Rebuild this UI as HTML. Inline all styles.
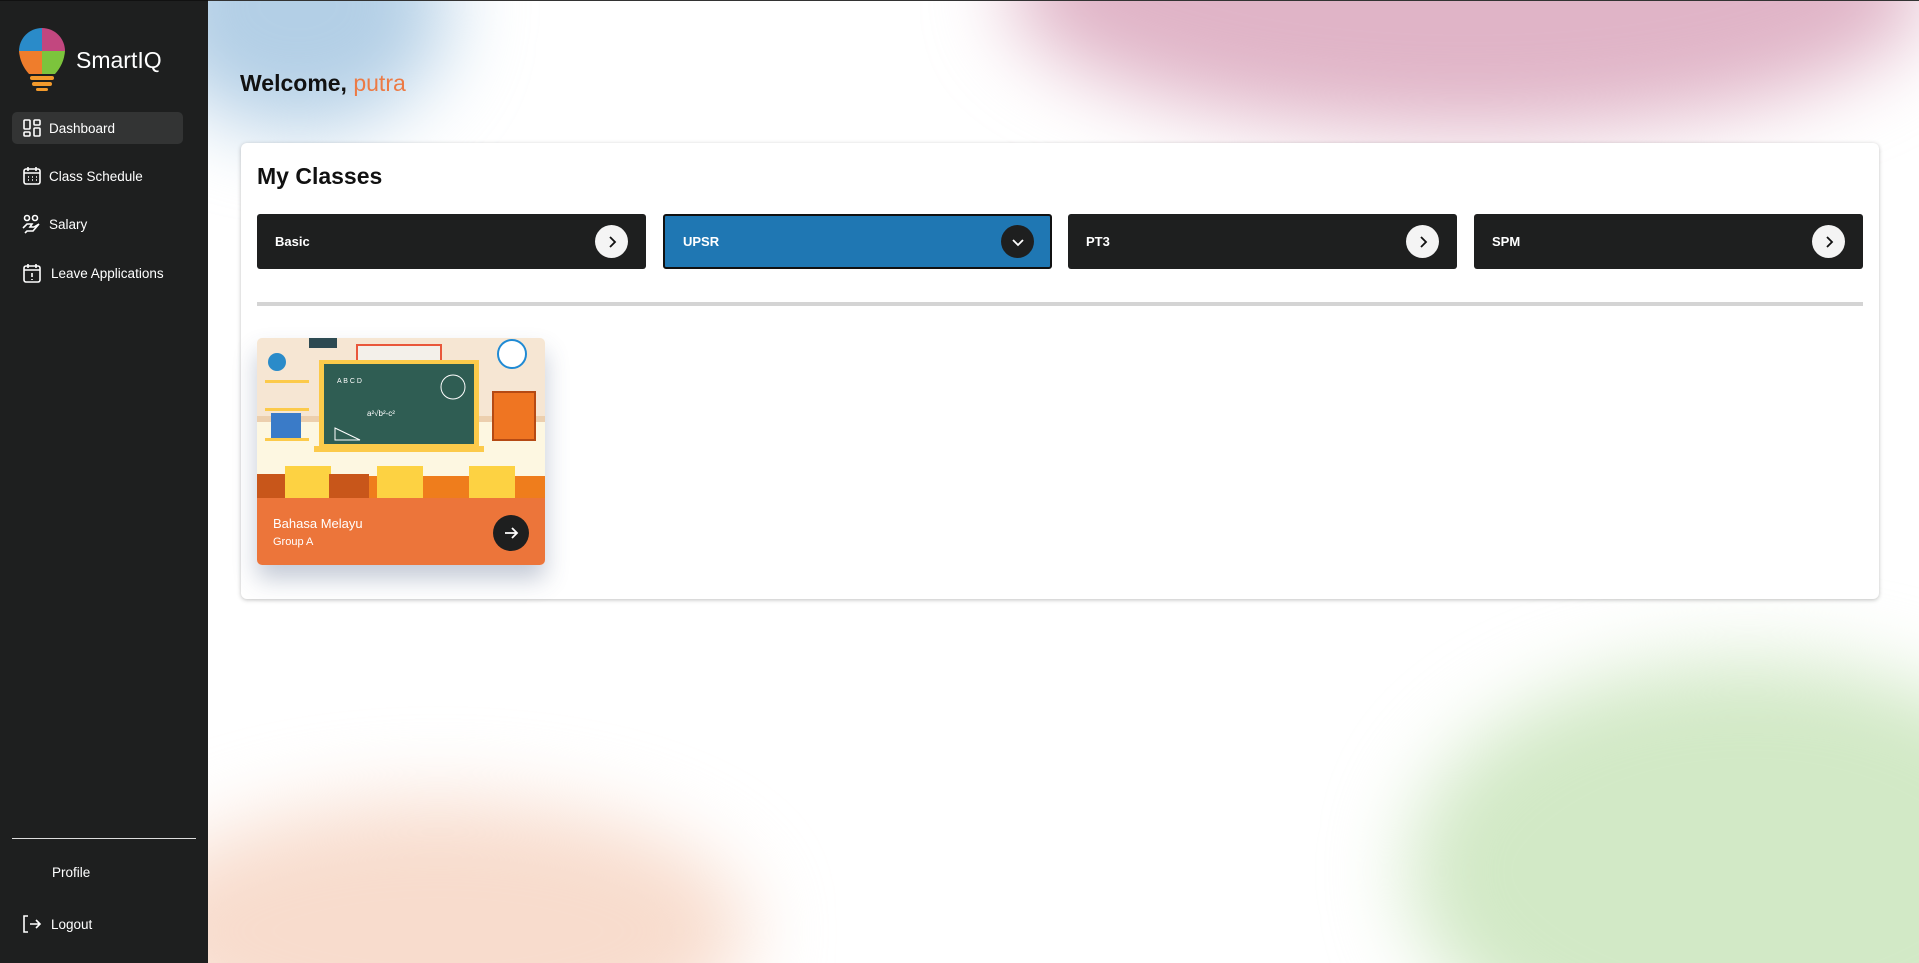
<!DOCTYPE html>
<html><head><meta charset="utf-8"><style>
*{margin:0;padding:0;box-sizing:border-box}
html,body{width:1919px;height:963px;overflow:hidden}
body{font-family:"Liberation Sans",sans-serif;background:#fff;position:relative}
.side{position:absolute;left:0;top:0;width:208px;height:963px;background:#1e1f1f;color:#fff;border-top:1px solid #111}
.main{position:absolute;left:208px;top:0;width:1711px;height:963px;overflow:hidden;border-top:1px solid #333}
.blob{position:absolute;border-radius:50%;filter:blur(40px)}
.nav{position:absolute;left:22px;font-size:13.5px;display:flex;align-items:center;gap:7px}
.nav svg{width:20px;height:20px}
.tab{position:absolute;top:214px;width:389px;height:55px;background:#1e1f1f;border-radius:3px;color:#fff;font-weight:bold;font-size:13px;display:flex;align-items:center;padding-left:18px}
.tab .c{position:absolute;right:18px;top:11px;width:33px;height:33px;border-radius:50%;background:#f4f4f4;display:flex;align-items:center;justify-content:center}
</style></head><body>
<div class="side">
  <svg style="position:absolute;left:17px;top:25px" width="50" height="68" viewBox="0 0 50 68">
    <path d="M25 2 A23 23 0 0 0 2 25 L25 25Z" fill="#2a8bc9"/>
    <path d="M25 2 A23 23 0 0 1 48 25 L25 25Z" fill="#c2477f"/>
    <path d="M2 25 Q3 38 12 48 L25 48 L25 25Z" fill="#ef7d2c"/>
    <path d="M48 25 Q47 38 38 48 L25 48 L25 25Z" fill="#7cc43c"/>
    <rect x="13" y="50" width="24" height="4" rx="2" fill="#f39a2c"/>
    <rect x="15" y="56" width="20" height="4" rx="2" fill="#f39a2c"/>
    <rect x="19" y="62" width="12" height="3" rx="1.5" fill="#f39a2c"/>
  </svg>
  <div style="position:absolute;left:76px;top:46px;font-size:23px">SmartIQ</div>
  <div style="position:absolute;left:12px;top:111px;width:171px;height:32px;background:#333434;border-radius:5px"></div>
  <div class="nav" style="top:117px"><svg viewBox="0 0 20 20" fill="none" stroke="#fff" stroke-width="1.6"><rect x="2" y="2" width="6" height="9" rx="1"/><rect x="12" y="2" width="6" height="5" rx="1"/><rect x="2" y="14" width="6" height="4" rx="1"/><rect x="12" y="10" width="6" height="8" rx="1"/></svg>Dashboard</div>
  <div class="nav" style="top:165px"><svg viewBox="0 0 20 20" fill="none" stroke="#fff" stroke-width="1.6"><rect x="2" y="3" width="16" height="15" rx="2"/><path d="M2 7h16M6 1v4M14 1v4"/><path d="M6 11h1M10 11h1M14 11h1M6 14h1M10 14h1M14 14h1" stroke-width="1.4"/></svg>Class Schedule</div>
  <div class="nav" style="top:213px"><svg viewBox="0 0 20 20" fill="none" stroke="#fff" stroke-width="1.6"><circle cx="5" cy="4" r="2.5"/><circle cx="13" cy="4" r="2.5"/><path d="M1 14l4-4h5l-2 3h4l5-3-6 7H5l-2 2"/></svg>Salary</div>
  <div class="nav" style="top:262px"><svg viewBox="0 0 20 20" fill="none" stroke="#fff" stroke-width="1.6"><rect x="2" y="3" width="16" height="16" rx="2"/><path d="M2 7h16M6 1v4M14 1v4M10 10v4M10 16v1"/></svg><span style="margin-left:2px">Leave Applications</span></div>
  <div style="position:absolute;left:12px;top:837px;width:184px;height:1px;background:#ddd"></div>
  <div style="position:absolute;left:52px;top:864px;font-size:13.5px">Profile</div>
  <div class="nav" style="top:913px"><svg viewBox="0 0 20 20" fill="none" stroke="#fff" stroke-width="1.6"><path d="M6 2H2v16h4M8 10h10M14 6l4 4-4 4"/></svg><span style="margin-left:2px">Logout</span></div>
</div>
<div class="main">
  <div class="blob" style="left:-60px;top:-120px;width:300px;height:250px;background:#b3cfe6"></div>
  <div class="blob" style="left:800px;top:-150px;width:920px;height:280px;background:#e0b4c7"></div>
  <div class="blob" style="left:-80px;top:800px;width:620px;height:260px;background:#f8dccd"></div>
  <div class="blob" style="left:1200px;top:660px;width:680px;height:420px;background:#d2e9c6"></div>
  <div style="position:absolute;left:32px;top:69px;font-size:23px;font-weight:bold;color:#111">Welcome, <span style="color:#ec7a44;font-weight:normal">putra</span></div>
  <div style="position:absolute;left:33px;top:142px;width:1638px;height:456px;background:#fff;border-radius:6px;box-shadow:0 1px 4px rgba(0,0,0,.25)">
    <div style="position:absolute;left:16px;top:20px;font-size:23px;font-weight:bold;color:#111">My Classes</div>
    <div style="position:absolute;left:16px;top:159px;width:1606px;height:4px;background:#d4d4d4"></div>
  </div>
</div>
<div class="tab" style="left:257px">Basic<div class="c"><svg width="14" height="14" viewBox="0 0 14 14"><path d="M5 2l5 5-5 5" fill="none" stroke="#111" stroke-width="1.8"/></svg></div></div>
<div class="tab" style="left:663px;background:#1f77b3;border:2px solid #111">UPSR<div class="c" style="background:#1e1f1f;top:9px;right:16px"><svg width="14" height="14" viewBox="0 0 14 14"><path d="M2 5l5 5 5-5" fill="none" stroke="#fff" stroke-width="1.8"/></svg></div></div>
<div class="tab" style="left:1068px">PT3<div class="c"><svg width="14" height="14" viewBox="0 0 14 14"><path d="M5 2l5 5-5 5" fill="none" stroke="#111" stroke-width="1.8"/></svg></div></div>
<div class="tab" style="left:1474px">SPM<div class="c"><svg width="14" height="14" viewBox="0 0 14 14"><path d="M5 2l5 5-5 5" fill="none" stroke="#111" stroke-width="1.8"/></svg></div></div>
<div style="position:absolute;left:257px;top:338px;width:288px;height:227px;border-radius:5px;overflow:hidden;box-shadow:0 14px 24px rgba(60,80,120,.3)">
  <svg width="288" height="160" viewBox="0 0 288 160" style="display:block">
    <rect width="288" height="160" fill="#fdf7e1"/>
    <rect width="288" height="80" fill="#f6e6d3"/>
    <rect y="78" width="288" height="6" fill="#eccfae"/>
    <rect x="52" y="0" width="28" height="10" fill="#2d4a52"/>
    <rect x="100" y="7" width="84" height="16" fill="#f3f0ea" stroke="#e9573b" stroke-width="2"/>
    <rect x="62" y="22" width="160" height="90" fill="#fcca4a"/>
    <rect x="67" y="26" width="150" height="80" fill="#2f5d53"/>
    <rect x="57" y="108" width="170" height="6" fill="#fcca4a"/>
    <text x="80" y="45" fill="#fff" font-size="7" font-family="Liberation Sans">A B C D</text>
    <text x="110" y="78" fill="#fff" font-size="8" font-family="Liberation Sans">a²√b²-c²</text>
    <path d="M78 90l25 12H78z" fill="none" stroke="#fff"/>
    <circle cx="196" cy="49" r="12" fill="none" stroke="#fff"/>
    <circle cx="255" cy="16" r="14" fill="#fff" stroke="#1f8ad4" stroke-width="2"/>
    <rect x="236" y="54" width="42" height="48" fill="#ef7522" stroke="#b54a14" stroke-width="2"/>
    <rect x="8" y="42" width="44" height="3" fill="#fcca4a"/><rect x="8" y="70" width="44" height="3" fill="#fcca4a"/><rect x="8" y="100" width="44" height="3" fill="#fcca4a"/>
    <rect x="14" y="75" width="30" height="25" fill="#3a7bc8"/>
    <circle cx="20" cy="24" r="9" fill="#2a8bc9"/>
    <rect x="0" y="138" width="288" height="22" fill="#ef7d1c"/>
    <rect x="0" y="136" width="60" height="24" fill="#c8561a"/>
    <rect x="28" y="128" width="46" height="32" fill="#fdd242"/>
    <rect x="120" y="128" width="46" height="32" fill="#fdd242"/>
    <rect x="212" y="128" width="46" height="32" fill="#fdd242"/>
    <rect x="72" y="136" width="40" height="24" fill="#c8561a"/>
  </svg>
  <div style="height:67px;background:#ec753a;position:relative;color:#fff">
    <div style="position:absolute;left:16px;top:18px;font-size:13px">Bahasa Melayu</div>
    <div style="position:absolute;left:16px;top:38px;font-size:11px">Group A</div>
    <div style="position:absolute;right:16px;top:17px;width:36px;height:36px;border-radius:50%;background:#1e1f1f;display:flex;align-items:center;justify-content:center"><svg width="16" height="16" viewBox="0 0 16 16"><path d="M2 8h12M9 3l5 5-5 5" fill="none" stroke="#fff" stroke-width="1.8"/></svg></div>
  </div>
</div>
</body></html>
